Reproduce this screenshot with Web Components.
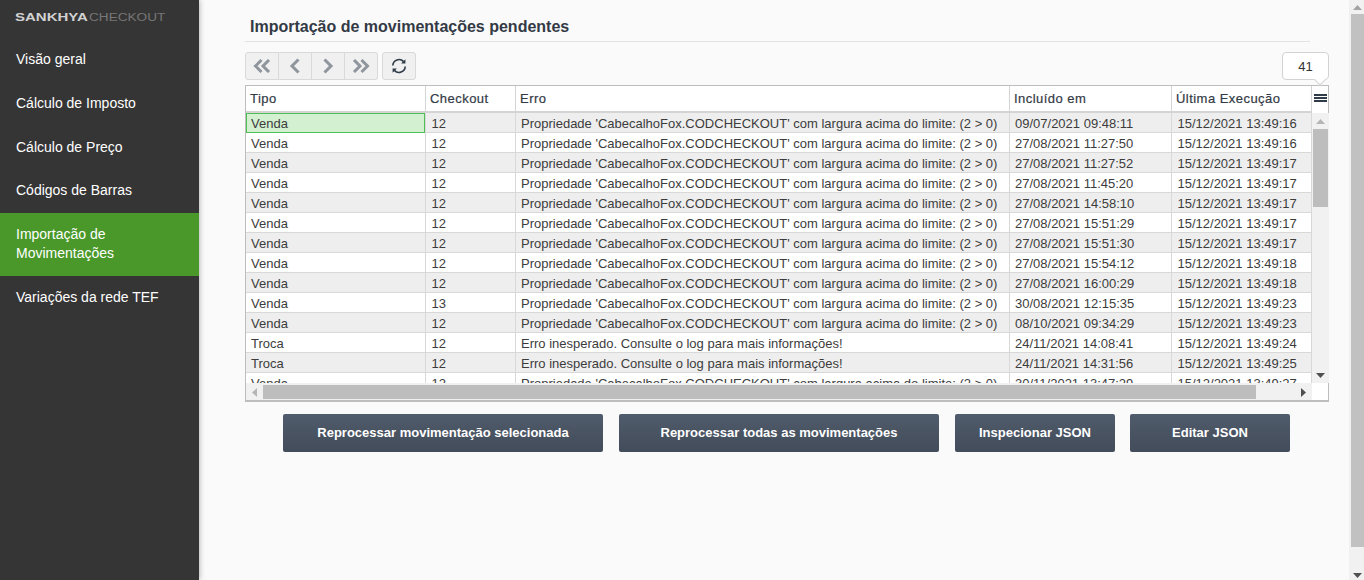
<!DOCTYPE html>
<html lang="pt"><head><meta charset="utf-8"><title>Importação</title>
<style>
html,body{margin:0;height:100%;overflow:hidden}
body{font-family:"Liberation Sans",Arial,sans-serif}
</style></head><body>
<app-shell></app-shell>
<script>
const rows=[
['Venda','12','P','09/07/2021 09:48:11','15/12/2021 13:49:16'],
['Venda','12','P','27/08/2021 11:27:50','15/12/2021 13:49:16'],
['Venda','12','P','27/08/2021 11:27:52','15/12/2021 13:49:17'],
['Venda','12','P','27/08/2021 11:45:20','15/12/2021 13:49:17'],
['Venda','12','P','27/08/2021 14:58:10','15/12/2021 13:49:17'],
['Venda','12','P','27/08/2021 15:51:29','15/12/2021 13:49:17'],
['Venda','12','P','27/08/2021 15:51:30','15/12/2021 13:49:17'],
['Venda','12','P','27/08/2021 15:54:12','15/12/2021 13:49:18'],
['Venda','12','P','27/08/2021 16:00:29','15/12/2021 13:49:18'],
['Venda','13','P','30/08/2021 12:15:35','15/12/2021 13:49:23'],
['Venda','12','P','08/10/2021 09:34:29','15/12/2021 13:49:23'],
['Troca','12','E','24/11/2021 14:08:41','15/12/2021 13:49:24'],
['Troca','12','E','24/11/2021 14:31:56','15/12/2021 13:49:25'],
['Venda','12','P','30/11/2021 13:47:29','15/12/2021 13:49:27']];
const msg={P:"Propriedade 'CabecalhoFox.CODCHECKOUT' com largura acima do limite: (2 > 0)",E:"Erro inesperado. Consulte o log para mais informações!"};
const esc=s=>s.replace(/&/g,'&amp;').replace(/</g,'&lt;').replace(/>/g,'&gt;');
const COLS='180px 90px 494px 162px 140px';

class SideNav extends HTMLElement{constructor(){super();this.attachShadow({mode:'open'}).innerHTML=`<style>
:host{display:block;width:199px;flex:none;background:#353535;box-shadow:0 0 6px rgba(0,0,0,.35);position:relative;z-index:2;color:#fff;font-size:14px;line-height:19.6px}
.logo{display:flex;height:38.4px;padding:12px 0 0 15px;box-sizing:border-box;font-size:10px;line-height:11px}
.logo b{display:block;font-weight:700;color:#d2d2d2;width:74px;transform:scaleX(1.5);transform-origin:left;white-space:nowrap}
.logo span{display:block;font-weight:400;color:#777;transform:scaleX(1.36);transform-origin:left;white-space:nowrap}
a{display:block;padding:12px 16px;color:#fff;text-decoration:none}
a.on{background:#4a982a}
</style><div class="logo"><b>SANKHYA</b><span>CHECKOUT</span></div>
<a>Visão geral</a><a>Cálculo de Imposto</a><a>Cálculo de Preço</a><a>Códigos de Barras</a><a class="on">Importação de Movimentações</a><a>Variações da rede TEF</a>`}}
customElements.define('side-nav',SideNav);

class ToolBtn extends HTMLElement{constructor(){super();this.attachShadow({mode:'open'}).innerHTML=`<style>
:host{display:flex;align-items:center;justify-content:center;width:33px;height:28px;box-sizing:border-box;background:#f0f0f0;border:1px solid #d9d9d9;border-left-width:0}
:host(:first-child){border-left-width:1px;border-radius:3px 0 0 3px;width:34px}
:host(:last-child){border-radius:0 3px 3px 0}
:host([solo]){width:34px;border-left-width:1px;border-radius:3px;margin-left:4px}
</style><slot></slot>`}}
customElements.define('tool-btn',ToolBtn);

class GridToolbar extends HTMLElement{constructor(){super();this.attachShadow({mode:'open'}).innerHTML=`<style>
:host{display:flex;align-items:flex-start;height:33px}
.g{display:flex}
svg{display:block}
.pop{margin-left:auto;width:47px;height:28px;box-sizing:border-box;border:1px solid #d3d3d3;border-radius:4px;background:#fff;font-size:13px;color:#333;display:flex;align-items:center;justify-content:center;position:relative}
.pop:after{content:"";position:absolute;left:33px;bottom:-5px;width:7px;height:7px;background:#fff;border-right:1px solid #d3d3d3;border-bottom:1px solid #d3d3d3;transform:rotate(45deg)}
</style>
<div class="g"><tool-btn><svg width="18" height="14" viewBox="0 0 18 14" fill="none" stroke="#8f959c" stroke-width="3"><path d="M8.500 1 2.500 7l6 6M16 1l-6 6 6 6"/></svg></tool-btn>
<tool-btn><svg width="12" height="16" viewBox="0 0 12 16" fill="none" stroke="#8f959c" stroke-width="3"><path d="M9.500 1.500 3 8l6.500 6.500"/></svg></tool-btn>
<tool-btn><svg width="12" height="16" viewBox="0 0 12 16" fill="none" stroke="#8f959c" stroke-width="3"><path d="M2.500 1.500 9 8l-6.500 6.500"/></svg></tool-btn>
<tool-btn><svg width="18" height="14" viewBox="0 0 18 14" fill="none" stroke="#8f959c" stroke-width="3"><path d="M2 1l6 6-6 6M9.500 1l6 6-6 6"/></svg></tool-btn></div>
<tool-btn solo><svg width="16" height="16" viewBox="0 0 16 16" fill="none" stroke="#2f3b48" stroke-width="1.600"><path d="M1.800 7.500A6.200 6.200 0 0 1 12.600 3.600M14.200 8.500A6.200 6.200 0 0 1 3.400 12.400"/><path d="M14.400 1.200v4.300H10.100zM1.600 14.800V10.500h4.300z" fill="#2f3b48" stroke="none"/></svg></tool-btn>
<div class="pop">41</div>`}}
customElements.define('grid-toolbar',GridToolbar);

class DataGrid extends HTMLElement{constructor(){super();
const hdr=['Tipo','Checkout','Erro','Incluído em','Última Execução'].map(t=>`<div class="h">${t}</div>`).join('');
const body=rows.map((r,i)=>`<div class="r ${i%2?'':'odd'}"><div class="c ${i==0?'sel':''}">${r[0]}</div><div class="c">${r[1]}</div><div class="c">${esc(msg[r[2]])}</div><div class="c">${r[3]}</div><div class="c">${r[4]}</div></div>`).join('');
this.attachShadow({mode:'open'}).innerHTML=`<style>
:host{display:grid;grid-template-columns:1066px 17px;grid-template-rows:27px 270px 17px;width:1084px;height:317px;box-sizing:border-box;border:1px solid #bdbdbd;border-bottom-width:2px;background:#fff;font-size:13px;color:#3c3c3c}
.head{display:grid;grid-template-columns:${COLS};border-bottom:2px solid #d4d4d4;box-sizing:border-box;height:27px;color:#333a45}
.h{padding:5px 0 0 4px;box-sizing:border-box;border-right:1px solid #d4d4d4;white-space:nowrap;font-size:13px;line-height:16px;letter-spacing:.46px;-webkit-text-stroke:.2px #333a45}
.menu{display:flex;flex-direction:column;gap:1px;padding:8px 2px 0 2px;box-sizing:border-box}
.menu i{display:block;height:2px;background:#2f3b48}
.rows{overflow:hidden;height:270px}
.r{display:grid;grid-template-columns:${COLS};height:20px;box-sizing:border-box;border-bottom:1px solid #d8d8d8}
.r.odd{background:#eee}
.c{padding:1px 0 0 5.500px;line-height:19px;border-right:1px solid #d8d8d8;white-space:nowrap;overflow:hidden;box-sizing:border-box;height:20px}
.c:nth-child(1),.c:nth-child(3),.c:nth-child(4){padding-left:5px}
.c.sel{background:#d3f1d0;box-shadow:inset 0 0 0 1px #4fbf55}
.vs{background:#f1f1f1;display:flex;flex-direction:column;align-items:center;height:270px;width:17px;box-sizing:border-box;padding:0 1px}
.ar{height:16px;width:15px;flex:none;display:flex;align-items:center;justify-content:center}
.vt{width:15px;height:78px;background:#bdbdbd;flex:none}
.sp{flex:1}
.hs{background:#f1f1f1;display:flex;height:17px;box-sizing:border-box;padding:2px 0 1px;align-items:stretch}
.hs .ar{width:17px;height:14px}
.ht{width:993px;background:#bdbdbd}
</style>
<div class="head">${hdr}</div><div class="menu"><i></i><i></i><i></i></div>
<div class="rows">${body}</div>
<div class="vs"><div class="ar"><svg width="9" height="5" viewBox="0 0 9 5"><path d="M4.500 0 9 5H0z" fill="#b5b5b5"/></svg></div><div class="vt"></div><div class="sp"></div><div class="ar"><svg width="9" height="5" viewBox="0 0 9 5"><path d="M0 0h9L4.500 5z" fill="#505050"/></svg></div></div>
<div class="hs"><div class="ar"><svg width="5" height="9" viewBox="0 0 5 9"><path d="M5 0v9L0 4.500z" fill="#b5b5b5"/></svg></div><div class="ht"></div><div class="sp"></div><div class="ar"><svg width="5" height="9" viewBox="0 0 5 9"><path d="M0 0l5 4.500L0 9z" fill="#505050"/></svg></div></div>
<div></div>`}}
customElements.define('data-grid',DataGrid);

class ActionBtn extends HTMLElement{constructor(){super();this.attachShadow({mode:'open'}).innerHTML=`<style>
:host{display:flex;align-items:center;justify-content:center;height:38px;box-sizing:border-box;border-radius:2px;background:linear-gradient(#505b6b,#424c5a);color:#fff;font-size:13px;font-weight:700;padding-bottom:2px}
</style><slot></slot>`}}
customElements.define('action-btn',ActionBtn);

class PageBar extends HTMLElement{constructor(){super();this.attachShadow({mode:'open'}).innerHTML=`<style>
:host{display:flex;flex-direction:column;width:15px;flex:none;background:#f1f1f1;box-sizing:border-box;padding-left:2px}
.a{height:14px;display:flex;align-items:center;justify-content:center;flex:none}
.t{height:533px;background:#c1c1c1;flex:none}
.s{flex:1}
</style><div class="a"><svg width="9" height="5" viewBox="0 0 9 5"><path d="M4.500 0 9 5H0z" fill="#a3a3a3"/></svg></div><div class="t"></div><div class="s"></div><div class="a" style="padding-top:5px;box-sizing:border-box"><svg width="9" height="5" viewBox="0 0 9 5"><path d="M0 0h9L4.500 5z" fill="#505050"/></svg></div>`}}
customElements.define('page-bar',PageBar);

class AppShell extends HTMLElement{constructor(){super();this.attachShadow({mode:'open'}).innerHTML=`<style>
:host{display:flex;width:1364px;height:580px;overflow:hidden;background:#fafafa}
main{flex:1;min-width:0;padding:16px 20px 0 46px;box-sizing:border-box}
h1{margin:0 0 10px 0;padding:0 0 5px 5px;font-size:16px;line-height:21px;font-weight:700;color:#333a45;border-bottom:1px solid #e3e3e3;width:1060px;height:20px}
.acts{display:flex;gap:16px;padding:12px 0 0 38px}
.acts :last-child{margin-left:-1px}
</style><side-nav></side-nav><main><h1>Importação de movimentações pendentes</h1><grid-toolbar></grid-toolbar><data-grid></data-grid>
<div class="acts"><action-btn style="width:320px">Reprocessar movimentação selecionada</action-btn><action-btn style="width:320px">Reprocessar todas as movimentações</action-btn><action-btn style="width:160px">Inspecionar JSON</action-btn><action-btn style="width:160px">Editar JSON</action-btn></div></main><page-bar></page-bar>`}}
customElements.define('app-shell',AppShell);
</script></body></html>
